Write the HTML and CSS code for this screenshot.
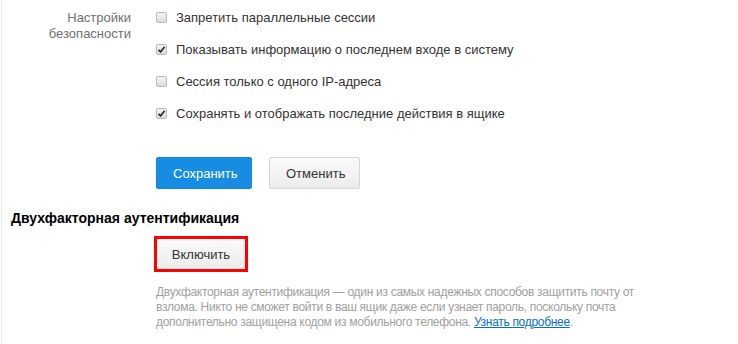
FILE: index.html
```html
<!DOCTYPE html>
<html>
<head>
<meta charset="utf-8">
<link rel="stylesheet" href="styles.css">
</head>
<body>
<div class="page">
  <div class="form-row">
    <div class="label">Настройки<br>безопасности</div>
    <div class="options">
      <div class="option"><span class="cb"></span><span>Запретить параллельные сессии</span></div>
      <div class="option"><span class="cb checked"><svg viewBox="0 0 11 11" width="11" height="11"><path d="M2.5 5.8 L4.6 7.8 L8.6 2.8" fill="none" stroke="#333" stroke-width="1.8"/></svg></span><span>Показывать информацию о последнем входе в систему</span></div>
      <div class="option"><span class="cb"></span><span>Сессия только с одного IP-адреса</span></div>
      <div class="option"><span class="cb checked"><svg viewBox="0 0 11 11" width="11" height="11"><path d="M2.5 5.8 L4.6 7.8 L8.6 2.8" fill="none" stroke="#333" stroke-width="1.8"/></svg></span><span>Сохранять и отображать последние действия в ящике</span></div>
    </div>
  </div>
  <div class="actions">
    <button class="btn btn-primary">Сохранить</button>
    <button class="btn">Отменить</button>
  </div>
  <h2 class="section-title">Двухфакторная аутентификация</h2>
  <div class="twofa">
    <button class="btn btn-outline-red">Включить</button>
    <p class="desc">Двухфакторная аутентификация — один из самых надежных способов защитить почту от взлома. Никто не сможет войти в ваш ящик даже если узнает пароль, поскольку почта дополнительно защищена кодом из мобильного телефона. <a href="#">Узнать подробнее</a>.</p>
  </div>
</div>
</body>
</html>
```
FILE: styles.css
```css
html, body {
  margin: 0;
  padding: 0;
  background: #fff;
}
body {
  font-family: "Liberation Sans", Arial, sans-serif;
  font-size: 13px;
  color: #333;
}
.page {
  margin-left: 1px;
  border-left: 1px solid #e9e9e9;
  min-height: 344px;
  padding-left: 9px;
  box-sizing: border-box;
  padding-top: 9px;
}
.form-row {
  display: flex;
}
.label {
  width: 120px;
  text-align: right;
  color: #6f6f6f;
  line-height: 16px;
  padding-top: 1px;
}
.options {
  margin-left: 25px;
  display: flex;
  flex-direction: column;
  gap: 16px;
}
.option {
  display: flex;
  align-items: center;
  height: 16px;
  color: #333;
}
.cb {
  width: 11px;
  height: 11px;
  box-sizing: border-box;
  border: 1px solid #b8b8b8;
  border-radius: 2px;
  background: linear-gradient(#f4f4f4, #dcdcdc);
  margin-right: 9px;
  display: inline-flex;
  position: relative;
}
.cb svg {
  position: absolute;
  left: -1px;
  top: -1px;
}
.actions {
  margin-top: 36px;
  margin-left: 145px;
  display: flex;
  gap: 17px;
}
.btn {
  font-family: "Liberation Sans", Arial, sans-serif;
  font-size: 13px;
  height: 32px;
  padding: 0 16px;
  border: 1px solid #d6d6d6;
  border-radius: 2px;
  background: linear-gradient(#fafafa, #ececec);
  color: #333;
  box-sizing: border-box;
}
.btn-primary {
  background: #168de2;
  border-color: #1487da;
  color: #fff;
  width: 96px;
}
.actions .btn:not(.btn-primary) {
  width: 91px;
}
.section-title {
  font-size: 14px;
  font-weight: bold;
  color: #000;
  margin: 21px 0 0 0;
  line-height: 16px;
}
.twofa {
  margin-left: 143px;
  margin-top: 10px;
}
.btn-outline-red {
  border: 3px solid #f00;
  border-radius: 0;
  height: 36px;
  width: 94px;
  padding: 0;
}
.desc {
  margin: 13px 0 0 2px;
  font-size: 12px;
  letter-spacing: -0.3px;
  color: #a0a0a0;
  line-height: 15px;
  width: 490px;
}
.desc a {
  color: #0a70c6;
  text-decoration: underline;
}
```
